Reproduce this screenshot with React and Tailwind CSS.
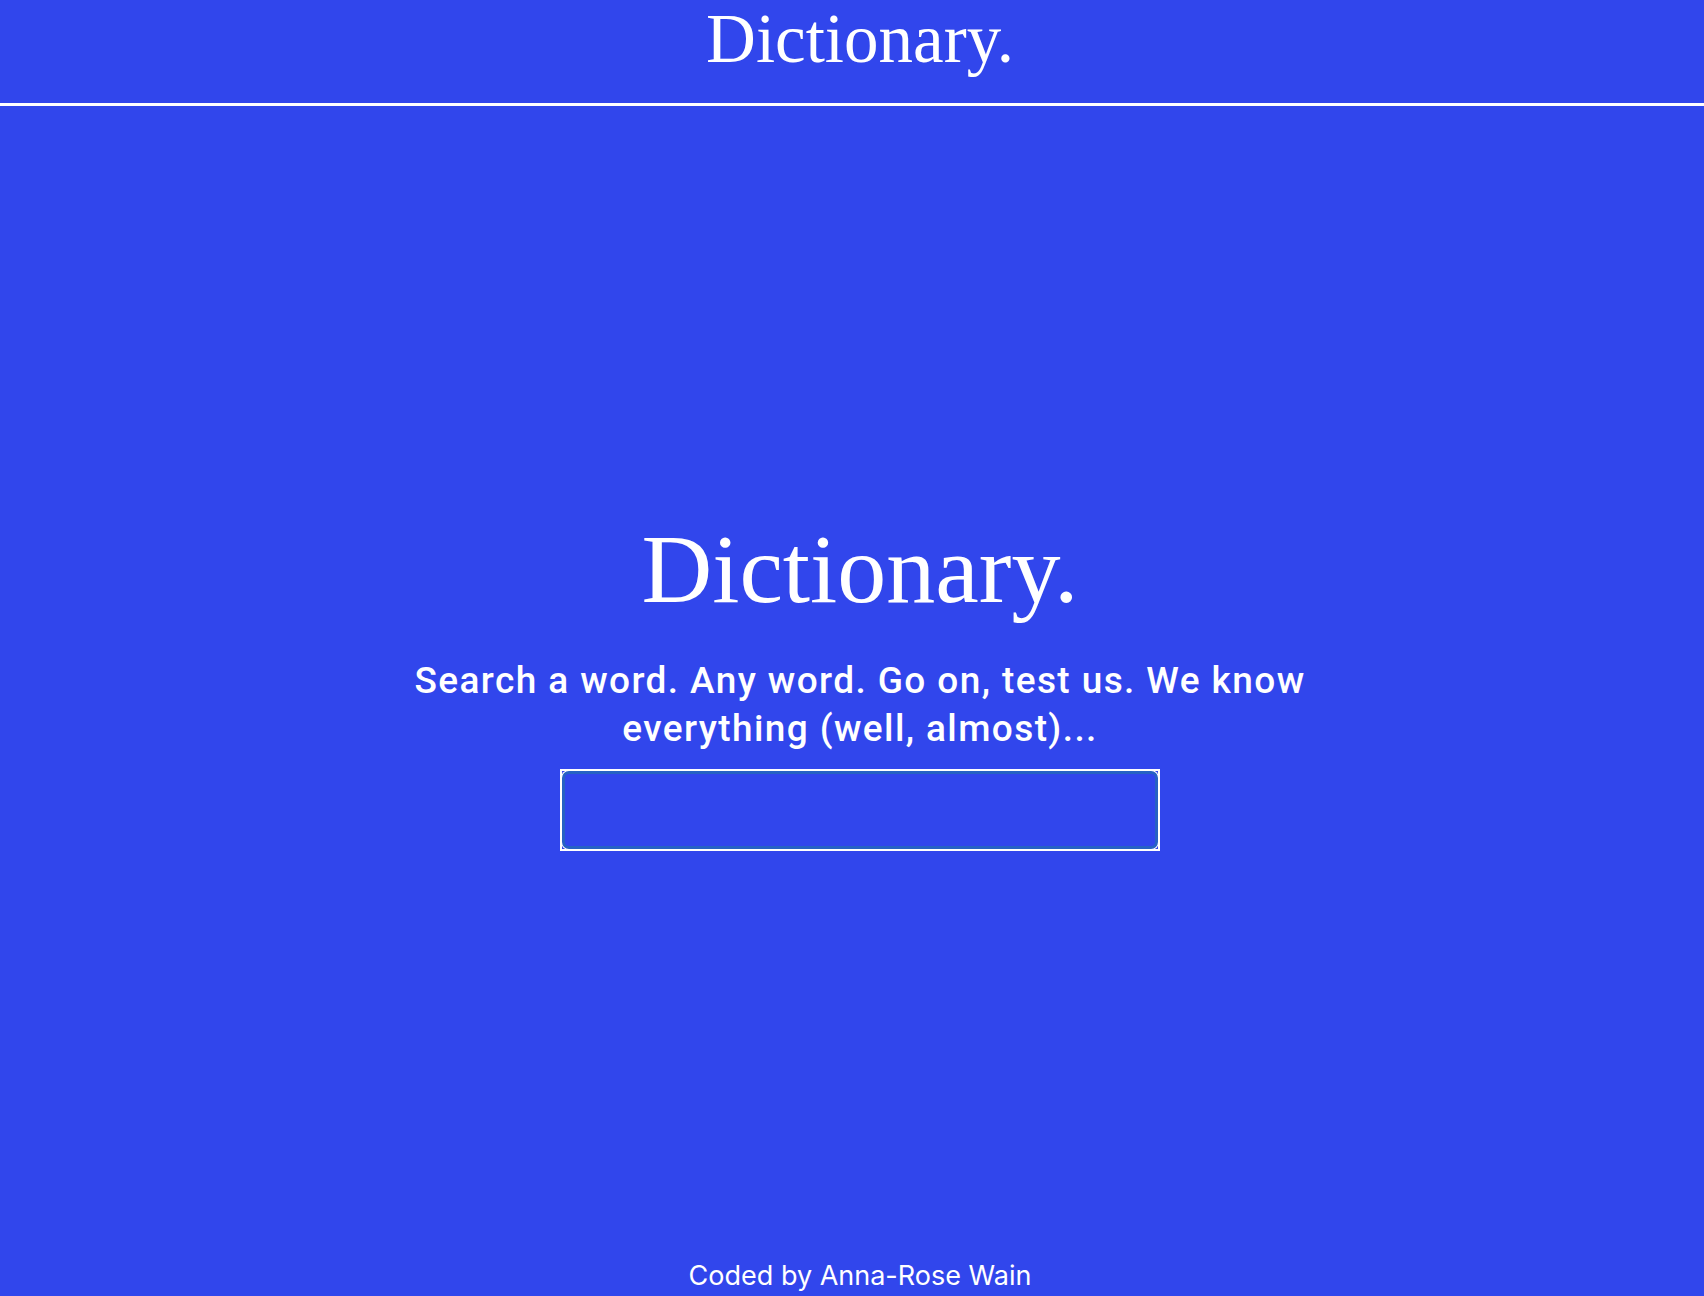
import React, { useState } from 'react';

export default function App() {
  const [word, setWord] = useState('');

  return (
    <div className="min-h-[1296px] flex flex-col bg-[#3146ec] text-white">
      {/* Header */}
      <header className="h-[106px] pl-4 border-b-[3px] border-white text-center">
        <h1 className="text-[69px] leading-[1.15] font-['Liberation_Serif',serif]">Dictionary.</h1>
      </header>

      {/* Search */}
      <main className="flex-1 pl-4 flex items-center justify-center">
        <div className="flex flex-col items-center text-center">
          <h2 className="text-[98px] leading-[1.15] font-['Liberation_Serif',serif]">Dictionary.</h2>
          <p className="mt-[32px] max-w-[960px] text-[37px] leading-[48px] tracking-[1.4px] font-medium font-['Roboto',sans-serif]">
            Search a word. Any word. Go on, test us. We know everything (well, almost)...
          </p>
          <form className="mt-[16px] w-[600px] h-[82px] border-2 border-white" onSubmit={(e) => e.preventDefault()}>
            <input
              type="search"
              value={word}
              onChange={(e) => setWord(e.target.value)}
              className="w-full h-full rounded-[7px] border-[3px] border-[#2662c4] bg-[#3146ec] shadow-[0_0_0_1px_#ffffff] px-4 text-2xl text-white outline-none font-['Roboto',sans-serif]"
            />
          </form>
        </div>
      </main>

      {/* Footer */}
      <footer className="pl-4 pb-[2px] text-center text-[27px] leading-[36px] font-['Inter',sans-serif]">
        Coded by Anna-Rose Wain
      </footer>
    </div>
  );
}
